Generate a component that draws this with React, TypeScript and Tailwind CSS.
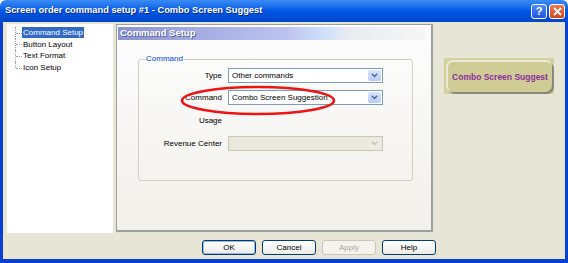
import React from "react";
import clsx from "clsx";

const font = { fontFamily: '"Liberation Sans", Arial, sans-serif' };

function Chevron({ color }: { color: string }) {
  return (
    <svg width="7" height="5" viewBox="0 0 7 5">
      <path d="M0.8 0.8 L3.5 3.6 L6.2 0.8" fill="none" stroke={color} strokeWidth="1.4" />
    </svg>
  );
}

function Select({ value, disabled }: { value?: string; disabled?: boolean }) {
  return (
    <div
      className={clsx(
        "flex h-[15px] w-[155px] items-center border",
        disabled ? "border-[#c9c7ba] bg-[#e9e8da]" : "border-[#7f9db9] bg-white"
      )}
    >
      <span className="flex-1 truncate pl-[3px] text-[8px] leading-none text-black">{value}</span>
      <span
        className={clsx(
          "m-px flex h-[11px] w-[13px] items-center justify-center rounded-[2px]",
          disabled ? "bg-[#eeede4]" : "bg-gradient-to-b from-[#dbe6fd] to-[#b7cbf7]"
        )}
      >
        <Chevron color={disabled ? "#c4c2b5" : "#4d6185"} />
      </span>
    </div>
  );
}

function DialogButton({ label, disabled, focused }: { label: string; disabled?: boolean; focused?: boolean }) {
  return (
    <button
      className={clsx(
        "flex h-[15px] w-[54px] items-center justify-center rounded-[3px] border text-[8px] leading-none",
        disabled
          ? "border-[#c9c7ba] bg-[#f4f3ee] text-[#aca899]"
          : "border-[#003c74] bg-gradient-to-b from-white to-[#ecebe6] text-black",
        focused && "shadow-[inset_0_0_0_1px_#9db6ec]"
      )}
    >
      {label}
    </button>
  );
}

export default function App() {
  return (
    <div className="relative flex h-[263px] w-[568px] flex-col bg-white" style={font}>
      {/* title bar */}
      <div className="flex h-[22px] items-center rounded-t-[6px] bg-gradient-to-b from-[#3b8cf5] via-[#0057e5] to-[#0246c9] pl-[5px] pr-[3px]">
        <span className="flex-1 text-[9.3px] font-bold text-white [text-shadow:1px_1px_0_#0a2a8a]">
          Screen order command setup #1 - Combo Screen Suggest
        </span>
        <div className="flex items-center gap-[2px]">
          <span className="flex h-[15px] w-[16px] items-center justify-center rounded-[3px] border border-white bg-gradient-to-b from-[#4f8bf7] to-[#1f55d6] text-[11px] font-bold leading-none text-white">
            ?
          </span>
          <span className="flex h-[15px] w-[16px] items-center justify-center rounded-[3px] border border-white bg-gradient-to-b from-[#ec7a52] to-[#d2431b]">
            <svg width="9" height="9" viewBox="0 0 9 9">
              <path d="M1 1 L8 8 M8 1 L1 8" stroke="white" strokeWidth="1.8" />
            </svg>
          </span>
        </div>
      </div>

      {/* client area */}
      <div className="flex flex-1 flex-col border-x-[3px] border-b-[4px] border-[#0a3fd4] bg-[#e6e5d6] pl-[4px] pt-[2px]">
        <div className="flex h-[209px]">
          {/* tree */}
          <div className="w-[106px] bg-white pl-[8px] pt-[3px]">
            <div className="relative flex flex-col text-[8px] leading-none text-black">
              {["Command Setup", "Button Layout", "Text Format", "Icon Setup"].map((item, i) => (
                <div key={item} className="flex h-[11.7px] items-center">
                  <span
                    className={clsx(
                      "w-[7px] self-stretch border-l border-dotted border-[#a0a0a0]",
                      i === 3 && "h-[6px]"
                    )}
                  >
                    <span className="mt-[5.5px] block w-[6px] border-t border-dotted border-[#a0a0a0]" />
                  </span>
                  <span
                    className={clsx(
                      "px-[1px] py-[1.5px]",
                      i === 0 && "bg-[#316ac5] text-white"
                    )}
                  >
                    {item}
                  </span>
                </div>
              ))}
            </div>
          </div>

          {/* property page */}
          <div className="ml-[3px] flex h-[208px] w-[317px] flex-col border border-r-2 border-b-2 border-[#9a9f9f] bg-gradient-to-b from-[#fdfdfe] to-[#f1f0ea] pl-px pt-[2px]">
            <div className="flex h-[13px] w-[308px] items-center bg-[linear-gradient(90deg,#8a93cf_0%,#a3abe3_25%,#bdc3f1_55%,#cfe3fb_68%,#e9ebf0_75%,#f6f6f6_100%)] pl-[2px] text-[9.5px] font-bold text-white [text-shadow:1px_1px_0_#5a6296]">
              Command Setup
            </div>

            <fieldset className="ml-[20px] mt-[14px] h-[127px] w-[275px] rounded-[3px] border border-[#d0d0bf] pl-[6px] pr-0">
              <legend className="px-px text-[8px] leading-[10px] text-[#0046d5]">Command</legend>
              <div className="-ml-[6px] mt-[4px] grid grid-cols-[83px_155px] items-center gap-x-[6px] gap-y-[7px] text-[8px] text-black">
                <span className="text-right">Type</span>
                <Select value="Other commands" />
                <span className="text-right">Command</span>
                <Select value="Combo Screen Suggestion" />
                <span className="h-[17px] text-right leading-[17px]">Usage</span>
                <span />
                <span className="text-right">Revenue Center</span>
                <Select disabled />
              </div>
            </fieldset>
          </div>

          {/* button preview */}
          <div className="ml-[11px] mt-[34px] h-[36px] w-[110px] bg-[#d3d09f] p-[2px]">
            <div className="flex h-full items-center justify-center rounded-[7px] border-t-2 border-l-2 border-[#ece9d2] bg-[#d0cc95] shadow-[2px_2px_0_#8a8878] text-[8.5px] font-bold text-[#8e2e9e]">
              Combo Screen Suggest
            </div>
          </div>
        </div>

        {/* dialog buttons */}
        <div className="ml-[195px] mt-[7px] flex gap-[6px]">
          <DialogButton label="OK" focused />
          <DialogButton label="Cancel" />
          <DialogButton label="Apply" disabled />
          <DialogButton label="Help" />
        </div>
      </div>

      {/* red annotation ellipse */}
      <svg className="pointer-events-none absolute left-[180px] top-[85px]" width="158" height="32" viewBox="0 0 158 32">
        <ellipse cx="78" cy="15.5" rx="76" ry="13.5" fill="none" stroke="#ee1414" strokeWidth="2.6" />
      </svg>
    </div>
  );
}
